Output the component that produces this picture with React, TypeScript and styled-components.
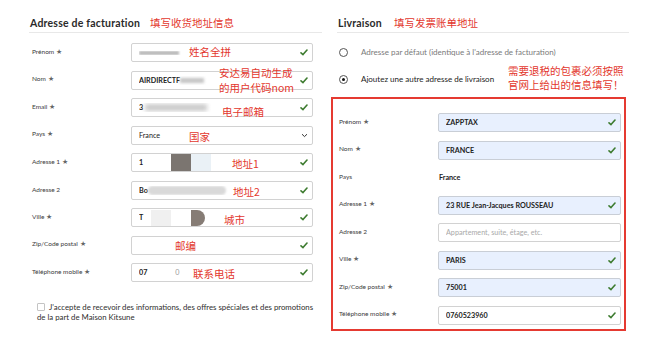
import React from "react"
import styled, { createGlobalStyle } from "styled-components"

const GlobalStyle = createGlobalStyle`
  body {
    margin: 0;
    background: #fff;
    font-family: Lato, "Open Sans", sans-serif;
  }
`

const Page = styled.div`
  position: relative;
  width: 650px;
  height: 349px;
  box-sizing: border-box;
  padding: 13px 0 0 29px;
  display: flex;
  gap: 15px;
  overflow: hidden;
  background: #fff;
`

const Column = styled.div<{ $w: number }>`
  width: ${({ $w }) => $w}px;
  display: flex;
  flex-direction: column;
`

const Header = styled.div<{ $gap: number }>`
  height: 19px;
  display: flex;
  align-items: center;
  gap: ${({ $gap }) => $gap}px;
  border-bottom: 1px solid #e8e8e8;
  padding-left: 1px;
`

const Title = styled.h2`
  margin: 0;
  font-size: 10.5px;
  font-weight: 700;
  color: #2a2a2a;
  letter-spacing: 0.2px;
`

const Note = styled.span`
  font-family: "Noto Sans CJK SC", sans-serif;
  font-size: 10.5px;
  line-height: 12px;
  color: #e3372d;
  white-space: nowrap;
`

// red notes written over the screenshot
const Mark = styled(Note)<{ $x: number; $y: number }>`
  position: absolute;
  left: ${({ $x }) => $x}px;
  top: ${({ $y }) => $y}px;
`

const Form = styled.div<{ $top: number; $pad: number; $field: number }>`
  display: grid;
  grid-template-columns: 99px ${({ $field }) => $field}px;
  grid-auto-rows: 19px;
  row-gap: 8.5px;
  margin-top: ${({ $top }) => $top}px;
  padding-left: ${({ $pad }) => $pad}px;
`

const Label = styled.div`
  align-self: center;
  padding-bottom: 2px;
  font-size: 6.5px;
  color: #3c3c3c;
  white-space: nowrap;
`

const Star = styled.span`
  color: #666;
  font-size: 6.5px;
  margin-left: 2px;
`

const Field = styled.div<{ $filled?: boolean }>`
  display: flex;
  align-items: center;
  box-sizing: border-box;
  height: 19px;
  padding: 0 4px 0 7px;
  border: 1px solid ${({ $filled }) => ($filled ? "#c9ced6" : "#d2d2d2")};
  border-radius: 2px;
  background: ${({ $filled }) => ($filled ? "#e8f0fe" : "#fff")};
  font-size: 7.2px;
  font-weight: 700;
  color: #222;
`

const Value = styled.div`
  flex: 1;
  display: flex;
  align-items: center;
  white-space: nowrap;
  overflow: hidden;
`

const Placeholder = styled.span`
  color: #a9a9a9;
  font-weight: 400;
`

const Plain = styled.div`
  align-self: center;
  font-size: 7.2px;
  font-weight: 700;
  color: #222;
  padding-left: 1px;
`

const Blur = styled.span<{ $w: number; $h: number; $c: string; $ml?: number; $r?: string; $b?: number }>`
  display: inline-block;
  width: ${({ $w }) => $w}px;
  height: ${({ $h }) => $h}px;
  background: ${({ $c }) => $c};
  margin-left: ${({ $ml }) => $ml ?? 0}px;
  border-radius: ${({ $r }) => $r ?? "0"};
  filter: blur(${({ $b }) => $b ?? 0}px);
  flex-shrink: 0;
`

const Faint = styled.span<{ $ml: number }>`
  margin-left: ${({ $ml }) => $ml}px;
  color: #999;
  font-weight: 400;
`

const Consent = styled.p`
  margin: 20px 0 0 8px;
  width: 279px;
  font-size: 7.8px;
  line-height: 10px;
  color: #2e2e2e;
`

const Box = styled.span`
  display: inline-block;
  width: 6px;
  height: 6px;
  border: 1px solid #c4c4c4;
  border-radius: 1px;
  margin-right: 4px;
  vertical-align: -1px;
`

const Options = styled.div`
  margin-top: 12px;
  display: flex;
  flex-direction: column;
  gap: 13px;
  padding-left: 2px;
`

const Option = styled.div<{ $muted?: boolean }>`
  height: 14px;
  display: flex;
  align-items: center;
  gap: 13px;
  font-size: 8px;
  color: ${({ $muted }) => ($muted ? "#7a7a7a" : "#222")};
`

const Radio = styled.span<{ $on?: boolean }>`
  width: 7px;
  height: 7px;
  border: 1px solid #555;
  border-radius: 50%;
  display: flex;
  align-items: center;
  justify-content: center;
  &::after {
    content: "";
    width: 3px;
    height: 3px;
    border-radius: 50%;
    background: ${({ $on }) => ($on ? "#111" : "transparent")};
  }
`

const Frame = styled.div`
  margin: 11px 0 0 -6px;
  width: 295px;
  box-sizing: border-box;
  border: 2px solid #e53a31;
  padding: 14px 3px 4px 6px;
`

const Check = () => (
  <svg width="8" height="7" viewBox="0 0 8 7">
    <path d="M1 3.8 L3 5.6 L7 1" fill="none" stroke="#3d7b2f" strokeWidth="1.6" strokeLinecap="round" strokeLinejoin="round" />
  </svg>
)

const Chevron = () => (
  <svg width="7" height="5" viewBox="0 0 7 5">
    <path d="M1 1.2 L3.5 3.6 L6 1.2" fill="none" stroke="#333" strokeWidth="1" />
  </svg>
)

type Row = {
  label: string
  req?: boolean
  filled?: boolean
  plain?: string
  select?: boolean
  noCheck?: boolean
  content?: React.ReactNode
}

const billing: Row[] = [
  { label: "Prénom", req: true, content: <Blur $w={40} $h={4} $c="#b9b9b9" $b={1.2} /> },
  {
    label: "Nom",
    req: true,
    content: (
      <>
        AIRDIRECTF
        <Blur $w={24} $h={5} $c="#c4c4c4" $b={1.5} />
      </>
    )
  },
  {
    label: "Email",
    req: true,
    content: (
      <>
        3
        <Blur $w={62} $h={7} $c="#cacaca" $ml={2} $b={2} />
      </>
    )
  },
  { label: "Pays", req: true, select: true, content: <span style={{ fontWeight: 400 }}>France</span> },
  {
    label: "Adresse 1",
    req: true,
    content: (
      <>
        1
        <Blur $w={20} $h={17} $c="#7b7570" $ml={28} />
        <Blur $w={20} $h={17} $c="#eaf1f6" />
      </>
    )
  },
  {
    label: "Adresse 2",
    content: (
      <>
        Bo
        <Blur $w={78} $h={9} $c="#d9d9d9" $r="5px" $b={1} />
      </>
    )
  },
  {
    label: "Ville",
    req: true,
    content: (
      <>
        T
        <Blur $w={20} $h={16} $c="#f0f0f0" $ml={8} />
        <Blur $w={14} $h={16} $c="#867c75" $ml={20} $r="0 8px 8px 0" />
      </>
    )
  },
  { label: "Zip/Code postal", req: true },
  {
    label: "Téléphone mobile",
    req: true,
    content: (
      <>
        07
        <Faint $ml={28}>0</Faint>
      </>
    )
  }
]

const shipping: Row[] = [
  { label: "Prénom", req: true, filled: true, content: "ZAPPTAX" },
  { label: "Nom", req: true, filled: true, content: "FRANCE" },
  { label: "Pays", plain: "France" },
  { label: "Adresse 1", req: true, filled: true, content: "23 RUE Jean-Jacques ROUSSEAU" },
  { label: "Adresse 2", noCheck: true, content: <Placeholder>Appartement, suite, étage, etc.</Placeholder> },
  { label: "Ville", req: true, filled: true, content: "PARIS" },
  { label: "Zip/Code postal", req: true, filled: true, content: "75001" },
  { label: "Téléphone mobile", req: true, content: "0760523960" }
]

const Rows = ({ rows }: { rows: Row[] }) => (
  <>
    {rows.map((r) => (
      <React.Fragment key={r.label}>
        <Label>
          {r.label}
          {r.req && <Star>★</Star>}
        </Label>
        {r.plain ? (
          <Plain>{r.plain}</Plain>
        ) : (
          <Field $filled={r.filled}>
            <Value>{r.content}</Value>
            {r.select ? <Chevron /> : !r.noCheck && <Check />}
          </Field>
        )}
      </React.Fragment>
    ))}
  </>
)

export default function App() {
  return (
    <Page>
      <GlobalStyle />
      <Column $w={293}>
        <Header $gap={10}>
          <Title>Adresse de facturation</Title>
          <Note>填写收货地址信息</Note>
        </Header>
        <Form $top={10} $pad={3} $field={182}>
          <Rows rows={billing} />
        </Form>
        <Consent>
          <Box />
          J'accepte de recevoir des informations, des offres spéciales et des promotions de la part de
          Maison Kitsune
        </Consent>
      </Column>

      <Column $w={292}>
        <Header $gap={12}>
          <Title>Livraison</Title>
          <Note>填写发票账单地址</Note>
        </Header>
        <Options>
          <Option $muted>
            <Radio />
            Adresse par défaut (identique à l'adresse de facturation)
          </Option>
          <Option>
            <Radio $on />
            Ajoutez une autre adresse de livraison
          </Option>
        </Options>
        <Frame>
          <Form $top={0} $pad={0} $field={183}>
            <Rows rows={shipping} />
          </Form>
        </Frame>
      </Column>

      <Mark $x={189} $y={46}>姓名全拼</Mark>
      <Mark $x={219} $y={67}>安达易自动生成</Mark>
      <Mark $x={219} $y={82}>的用户代码nom</Mark>
      <Mark $x={222} $y={106}>电子邮箱</Mark>
      <Mark $x={189} $y={131}>国家</Mark>
      <Mark $x={232} $y={158}>地址1</Mark>
      <Mark $x={233} $y={186}>地址2</Mark>
      <Mark $x={224} $y={214}>城市</Mark>
      <Mark $x={175} $y={240}>邮编</Mark>
      <Mark $x={193} $y={268}>联系电话</Mark>
      <Mark $x={508} $y={65}>需要退税的包裹必须按照</Mark>
      <Mark $x={508} $y={79}>官网上给出的信息填写！</Mark>
    </Page>
  )
}
